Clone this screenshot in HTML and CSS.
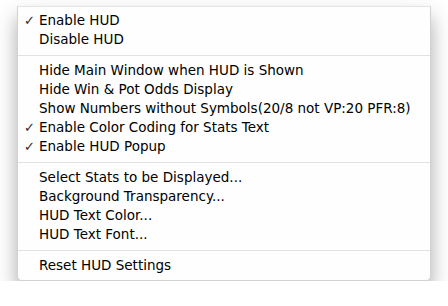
FILE: index.html
```html
<!DOCTYPE html>
<html lang="en">
<head>
  <meta charset="UTF-8">
  <title>HUD Menu</title>
  <link rel="stylesheet" href="styles.css">
</head>
<body>

  <!-- Context menu -->
  <div class="menu">
    <div class="item checked">Enable HUD</div>
    <div class="item">Disable HUD</div>
    <div class="sep"></div>
    <div class="item">Hide Main Window when HUD is Shown</div>
    <div class="item">Hide Win &amp; Pot Odds Display</div>
    <div class="item">Show Numbers without Symbols(20/8 not VP:20 PFR:8)</div>
    <div class="item checked">Enable Color Coding for Stats Text</div>
    <div class="item checked">Enable HUD Popup</div>
    <div class="sep"></div>
    <div class="item">Select Stats to be Displayed...</div>
    <div class="item">Background Transparency...</div>
    <div class="item">HUD Text Color...</div>
    <div class="item">HUD Text Font...</div>
    <div class="sep"></div>
    <div class="item">Reset HUD Settings</div>
  </div>

</body>
</html>
```

FILE: styles.css
```css
body {
    margin: 0;
    padding: 6px 0 0 17px;
    background: #fff;
    font-family: "DejaVu Sans", sans-serif;
}
.menu {
    width: 412px;
    padding: 4px 0 5px;
    background: #fefefe;
    border: 1px solid #d2d2d2;
    border-top-color: #e4e4e4;
    border-radius: 0 0 5px 5px;
    box-shadow: 0 11px 20px rgba(0,0,0,0.34);
}
.item {
    position: relative;
    height: 19px;
    line-height: 19px;
    padding-left: 21px;
    font-size: 13.5px;
    color: #000;
    white-space: nowrap;
}
.item.checked::before {
    content: "✓";
    position: absolute;
    left: 6px;
    top: 0;
    font-size: 13px;
    color: #2a2a2a;
}
.sep {
    height: 1px;
    margin: 6px 0 5px;
    background: #e2e2e2;
}
```
